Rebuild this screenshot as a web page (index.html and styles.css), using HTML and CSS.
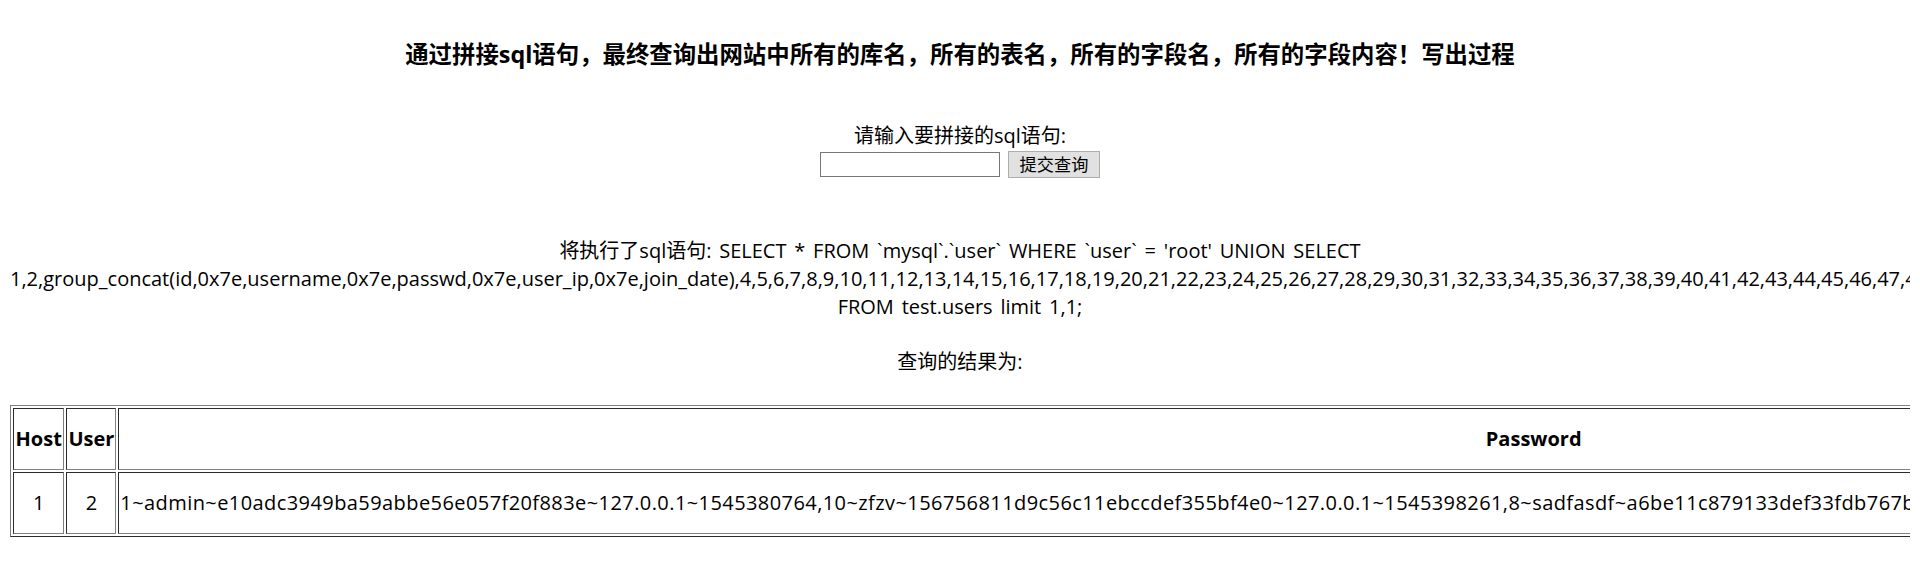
FILE: index.html
```html
<!DOCTYPE html>
<html lang="zh-CN">
<head>
<meta charset="utf-8">
<title>SQL</title>
<link rel="stylesheet" href="styles.css">
</head>
<body>
<div class="page">
  <h3 class="title">通过拼接sql语句，最终查询出网站中所有的库名，所有的表名，所有的字段名，所有的字段内容！写出过程</h3>
  <form class="query">
    <div class="label">请输入要拼接的sql语句:</div>
    <div class="controls">
      <input class="field" type="text" name="id">
      <button class="submit" type="button">提交查询</button>
    </div>
  </form>
  <div class="sql">将执行了sql语句: SELECT * FROM `mysql`.`user` WHERE `user` = 'root' UNION SELECT 1,2,group_concat(id,0x7e,username,0x7e,passwd,0x7e,user_ip,0x7e,join_date),4,5,6,7,8,9,10,11,12,13,14,15,16,17,18,19,20,21,22,23,24,25,26,27,28,29,30,31,32,33,34,35,36,37,38,39,40,41,42,43,44,45,46,47,48,49,50,51 FROM test.users limit 1,1;</div>
  <div class="result">查询的结果为:</div>
  <table class="grid">
    <tr>
      <th class="c-host">Host</th>
      <th class="c-user">User</th>
      <th class="c-pass">Password</th>
    </tr>
    <tr>
      <td class="c-host">1</td>
      <td class="c-user">2</td>
      <td class="c-pass data">1~admin~e10adc3949ba59abbe56e057f20f883e~127.0.0.1~1545380764,10~zfzv~156756811d9c56c11ebccdef355bf4e0~127.0.0.1~1545398261,8~sadfasdf~a6be11c879133def33fdb767b</td>
    </tr>
  </table>
</div>
</body>
</html>
```
FILE: styles.css
```css
html {
  overflow: hidden;
}
body {
  margin: 10px;
  font-family: "Open Sans", "Noto Sans CJK SC", sans-serif;
  font-size: 20px;
  color: #000;
  background: #fff;
}
.page {
  text-align: center;
}
.title {
  font-size: 23.4px;
  font-weight: bold;
  line-height: 31px;
  margin: 29px 0 0 0;
}
.query {
  margin: 52.8px 0 0 0;
}
.label {
  line-height: 26.4px;
}
.controls {
  display: flex;
  justify-content: center;
  align-items: center;
  gap: 8px;
  height: 30px;
}
.field {
  box-sizing: border-box;
  width: 180px;
  height: 25px;
  border: 1px solid #767676;
  padding: 1px 2px;
  margin: 0;
  font-size: 16px;
}
.submit {
  box-sizing: border-box;
  height: 27px;
  padding: 0 11px;
  margin: 0;
  border: 1px solid #adadad;
  background: #e1e1e1;
  font-family: "Open Sans", "Noto Sans CJK SC", sans-serif;
  font-size: 17.2px;
  line-height: 23px;
  color: #000;
}
.sql {
  margin-top: 57.3px;
  line-height: 28px;
  word-spacing: 2.6px;
}
.result {
  margin-top: 28.3px;
  line-height: 26.4px;
}
.grid {
  margin-top: 29.8px;
  width: 2942px;
  border: 1px outset gray;
  border-spacing: 2.5px;
  border-collapse: separate;
}
.grid th,
.grid td {
  border: 1px inset gray;
  padding: 1px;
  height: 58px;
  line-height: 26.4px;
}
.grid th {
  font-weight: bold;
}
.c-host {
  width: 47.4px;
}
.c-user {
  width: 45px;
}
.data {
  text-align: left;
  white-space: nowrap;
  letter-spacing: 0.42px;
}
```
